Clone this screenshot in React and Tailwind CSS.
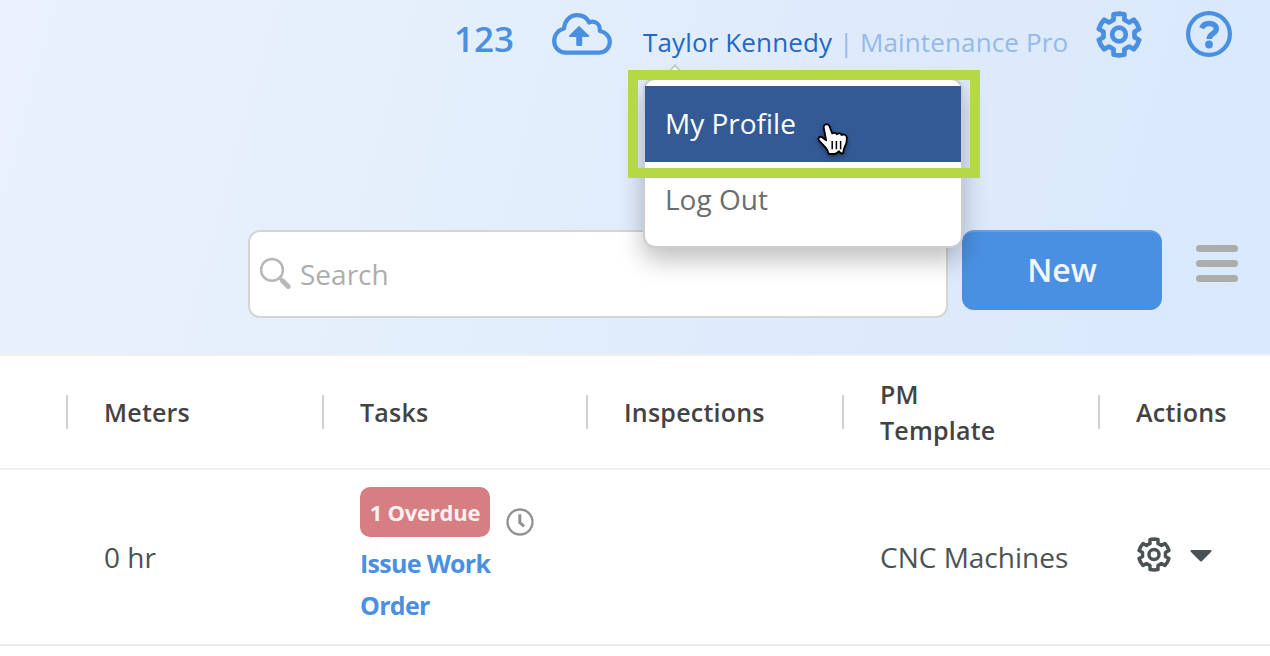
import { useState } from 'react';
import clsx from 'clsx';

// Outline of a six-toothed gear, centred on 0,0
const GEAR_POINTS = [0, 60, 120, 180, 240, 300]
  .flatMap((deg) => {
    const a = (deg * Math.PI) / 180;
    return [
      [-5.4, -14.8],
      [-5.4, -20.2],
      [0, -20.9],
      [5.4, -20.2],
      [5.4, -14.8],
    ].map(([x, y]) => `${(x * Math.cos(a) - y * Math.sin(a)).toFixed(2)},${(x * Math.sin(a) + y * Math.cos(a)).toFixed(2)}`);
  })
  .join(' ');

function GearIcon({ className }) {
  return (
    <svg viewBox="-23 -23.5 46 47" className={className} fill="none" stroke="currentColor" strokeWidth="4.7" strokeLinejoin="round">
      <polygon points={GEAR_POINTS} />
      <circle r="6.8" />
    </svg>
  );
}

function CloudUploadIcon({ className }) {
  return (
    <svg viewBox="0 0 60 42" className={className} fill="none">
      <path
        d="M14 39.7 C7 39.7 2.2 34.3 2.2 28 C2.2 22 6 17.3 12 15.6 C12.5 7.8 18 2.2 25.2 2.2 C30.7 2.2 35 5 37.2 9.5 C42 6.8 48.5 10.4 47.8 18 C53.7 19 57.8 23.3 57.8 28.8 C57.8 35 53.2 39.7 47 39.7 Z"
        stroke="currentColor"
        strokeWidth="4.2"
        strokeLinejoin="round"
      />
      <path
        d="M27 12.8 L37 22.4 Q37.8 24 36 24 H30.2 V31.5 Q30.2 33 28.8 33 H25.7 Q24.2 33 24.2 31.5 V24 H18 Q16.2 24 17.2 22.4 Z"
        fill="currentColor"
      />
    </svg>
  );
}

function HelpIcon({ className }) {
  return (
    <svg viewBox="0 0 46 46" className={className} fill="none" stroke="currentColor">
      <circle cx="23" cy="23" r="20.9" strokeWidth="4.2" />
      <path d="M15.7 17.2 C17 14 20 12.5 23.2 12.5 C27.3 12.5 30.3 14.6 30.3 18 C30.3 22.8 23.2 22.2 23.2 28" strokeWidth="5.4" />
      <circle cx="23" cy="33.5" r="3.9" fill="currentColor" stroke="none" />
    </svg>
  );
}

function SearchIcon({ className }) {
  return (
    <svg viewBox="0 0 32 34" className={className} fill="none" stroke="#b8b8b8">
      <circle cx="12" cy="12.9" r="10.9" strokeWidth="2.6" />
      <path d="M19.5 20.7 L22 23" strokeWidth="3" />
      <path d="M22.6 24 L28.2 29.6" strokeWidth="5" strokeLinecap="round" />
    </svg>
  );
}

function ClockIcon({ className }) {
  return (
    <svg viewBox="0 0 28 28" className={className} fill="none" stroke="#929292">
      <circle cx="14" cy="14" r="12.5" strokeWidth="2.3" />
      <path d="M13.8 6.2 V14.5 L18 18.3" strokeWidth="3" />
    </svg>
  );
}

function HandCursor({ className }) {
  return (
    <svg viewBox="0 0 34 36" className={className}>
      <path
        d="M9.5 3.5 C11.5 2.7 13 3.8 13.7 5.8 L16.2 12.5 C18 11.4 20.2 11.8 20.8 13.2 C22.5 11.8 25 12.4 25.5 14 C27.5 12.9 30.3 13.8 30.7 16 C31.2 19.5 30.3 23.3 28.5 26.5 C27.4 28.5 27.5 30 27.2 32 C25.5 33 23.8 32 23 30.2 C21.5 32 20 33 18.5 33 H12.8 C12.3 30 11.2 28.6 9.4 26.4 L3.5 20 C1 17.5 3.5 14.8 6.2 16.2 L10.2 19.4 L7.8 7.2 C7.4 5.5 8 4.2 9.5 3.5 Z"
        fill="white"
        stroke="black"
        strokeWidth="1.8"
        strokeLinejoin="round"
      />
      <path d="M16.2 20 V28.2 M20.4 20 V28.2 M24.6 20 V28.2" stroke="black" strokeWidth="1.5" />
    </svg>
  );
}

function ProfileMenu() {
  const [active, setActive] = useState('My Profile');

  return (
    <div className="absolute left-0 top-[79px] z-10 h-[170px] w-[320px] rounded-xl border-2 border-[#cdcdcf] bg-white pt-1.5 shadow-[0_12px_24px_rgba(0,0,0,0.25)]">
      <div className="absolute left-[23px] top-[-13px] h-3.5 w-3.5 rotate-45 border-l-2 border-t-2 border-[#c3c9d2] bg-white" />
      {['My Profile', 'Log Out'].map((label) => (
        <button
          key={label}
          onMouseEnter={() => setActive(label)}
          className={clsx(
            'relative block h-[76px] w-full pb-0.5 pl-5 text-left text-[28px] tracking-normal',
            active === label ? 'bg-[#335a95] text-white' : 'text-[#6d6d6d]'
          )}
        >
          {label}
        </button>
      ))}
      <HandCursor className="absolute left-[171px] top-[41px] h-9 w-[34px] drop-shadow-[0_2px_2px_rgba(0,0,0,0.4)]" />
      {/* callout frame around the highlighted item */}
      <div className="pointer-events-none absolute left-[-17px] top-[-10px] h-[108px] w-[352px] border-[10px] border-[#b5d945]" />
    </div>
  );
}

function TopBar() {
  return (
    <div className="flex h-[230px] items-start text-[#4a90e2]">
      <div className="ml-[454px] mt-[15px] w-[98px] text-[35px] font-semibold leading-[48px]">123</div>
      <CloudUploadIcon className="mt-[13px] h-[42px] w-[60px]" />
      <div className="relative -mt-px ml-[31px] w-[453px] whitespace-nowrap text-[26px] leading-[38px] tracking-[0.13px]">
        <div className="flex pt-6">
          <span className="w-[196px] text-[#2169c4]">Taylor Kennedy</span>
          <span className="w-[21px] text-[#95b9e8]">|</span>
          <span className="text-[#95b9e8]">Maintenance Pro</span>
        </div>
        <ProfileMenu />
      </div>
      <GearIcon className="mt-[10.5px] h-[47px] w-[46px]" />
      <HelpIcon className="ml-11 mt-[11px] h-[46px] w-[46px]" />
    </div>
  );
}

function Toolbar() {
  return (
    <div className="flex items-start pl-[248px]">
      <label className="flex h-[88px] w-[700px] items-center rounded-xl border-2 border-[#d5d5d6] bg-white pl-2.5">
        <SearchIcon className="h-[34px] w-8" />
        <input
          placeholder="Search"
          className="ml-2 w-80 text-[28px] outline-none placeholder:text-[#adadad]"
        />
      </label>
      <button className="ml-3.5 h-20 w-[200px] rounded-xl border-t-2 border-[#64a0e8] bg-[#4a90e2] pb-0.5 text-[32px] font-semibold text-[#f1f6fd] shadow-[0_2px_3px_rgba(255,220,220,0.35)]">
        New
      </button>
      <button className="ml-[34px] mt-[15px] flex flex-col gap-2">
        <span className="h-[7px] w-[42px] rounded-sm bg-[#acacac]" />
        <span className="h-[7px] w-[42px] rounded-sm bg-[#acacac]" />
        <span className="h-[7px] w-[42px] rounded-sm bg-[#acacac]" />
      </button>
    </div>
  );
}

const COLUMNS = ['Meters', 'Tasks', 'Inspections', 'PM Template', 'Actions'];
const GRID = 'grid grid-cols-[256px_264px_256px_256px_172px] pl-[66px]';

function AssetTable() {
  return (
    <div className="text-[#4b5256]">
      <div className={clsx(GRID, 'h-[116px] items-center border-b-2 border-t-2 border-[#f0f0f0] text-[#434343]')}>
        {COLUMNS.map((name) => (
          <div key={name} className="flex items-center">
            <span className="h-[34px] w-0.5 shrink-0 bg-[#d0d0d0]" />
            <span className="w-[130px] pl-9 text-[25px] font-semibold leading-9 tracking-[0.22px]">{name}</span>
          </div>
        ))}
      </div>

      <div className={clsx(GRID, 'h-[176px] border-b-2 border-[#ebebeb]')}>
        <div className="pl-[38px] pt-[68px] text-[28px] leading-[38px]">0 hr</div>
        <div className="pl-[38px] pt-[17px]">
          <div className="flex items-start">
            <span className="flex h-[50px] w-[130px] items-center justify-center whitespace-nowrap rounded-[10px] bg-[#d77e82] text-[22px] font-bold tracking-[-0.25px] text-[#fcf0f0]">
              1 Overdue
            </span>
            <ClockIcon className="ml-4 mt-[21px] h-7 w-7" />
          </div>
          <a className="mt-[5px] block w-[140px] text-[25px] font-bold leading-[42px] tracking-[-0.7px] text-[#4a90e2]">Issue Work Order</a>
        </div>
        <div />
        <div className="whitespace-nowrap pl-[38px] pt-[68px] text-[28px] leading-[38px]">CNC Machines</div>
        <div className="flex items-start pl-[39px]">
          <GearIcon className="mt-[67px] h-[35px] w-[34px]" />
          <svg viewBox="0 0 22 13" className="ml-[19px] mt-[80px] h-[13px] w-[22px]" fill="currentColor">
            <path d="M1.5 0 H20.5 Q22.2 0.5 21 1.9 L12.3 10.7 Q11 12.1 9.7 10.7 L1 1.9 Q-0.2 0.5 1.5 0 Z" />
          </svg>
        </div>
      </div>
    </div>
  );
}

export default function App() {
  return (
    <div className="h-[656px] w-[1270px] overflow-hidden bg-white font-['Open_Sans','Noto_Sans',sans-serif]">
      <header className="h-[354px] bg-[linear-gradient(105deg,#eaf1fc_0%,#e4effc_35%,#dfebfc_60%,#d9e8fc_100%)]">
        <TopBar />
        <Toolbar />
      </header>
      <AssetTable />
    </div>
  );
}
